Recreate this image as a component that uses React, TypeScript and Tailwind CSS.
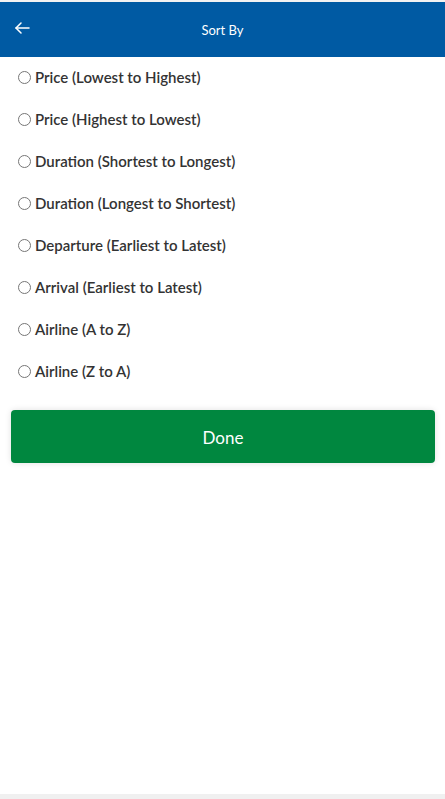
import { useState } from "react";

const options = [
  "Price (Lowest to Highest)",
  "Price (Highest to Lowest)",
  "Duration (Shortest to Longest)",
  "Duration (Longest to Shortest)",
  "Departure (Earliest to Latest)",
  "Arrival (Earliest to Latest)",
  "Airline (A to Z)",
  "Airline (Z to A)",
];

export default function App() {
  const [selected, setSelected] = useState<string | null>(null);

  return (
    <div className="flex h-[799px] flex-col bg-white font-['Lato','Noto_Sans',sans-serif]">
      <div className="h-[2px] bg-[#f2f2f2]" />
      <header className="relative flex h-[55px] items-center justify-center bg-[#005aa3] text-white">
        <button className="absolute left-[15px] top-[20px] flex h-[12px] w-[15px] items-center justify-center">
          <svg width="15" height="12" viewBox="0 0 15 12" fill="none" stroke="white" strokeWidth="1.5" strokeLinecap="round" strokeLinejoin="round">
            <path d="M14 6H1" />
            <path d="M6 1L1 6L6 11" />
          </svg>
        </button>
        <h1 className="pt-[2px] text-[13px]">Sort By</h1>
      </header>

      <ul className="flex flex-col">
        {options.map((label) => (
          <li key={label}>
            <label className="flex h-[42px] cursor-pointer items-center pb-[2px]">
              <input
                type="radio"
                name="sort"
                className="m-0 ml-[18px] mr-[4px] h-[13px] w-[13px]"
                checked={selected === label}
                onChange={() => setSelected(label)}
              />
              <span className="text-[15px] font-semibold text-[#333]">{label}</span>
            </label>
          </li>
        ))}
      </ul>

      <div className="pl-[11px] pr-[10px] pt-[17px]">
        <button className="flex h-[53px] w-full items-center justify-center rounded-[4px] bg-[#00873f] pt-[2px] text-[17px] text-white shadow-[0_0_6px_rgba(0,0,0,0.12)]">
          Done
        </button>
      </div>

      <div className="flex-1" />
      <div className="h-[5px] bg-[#f0f0f0]" />
    </div>
  );
}
